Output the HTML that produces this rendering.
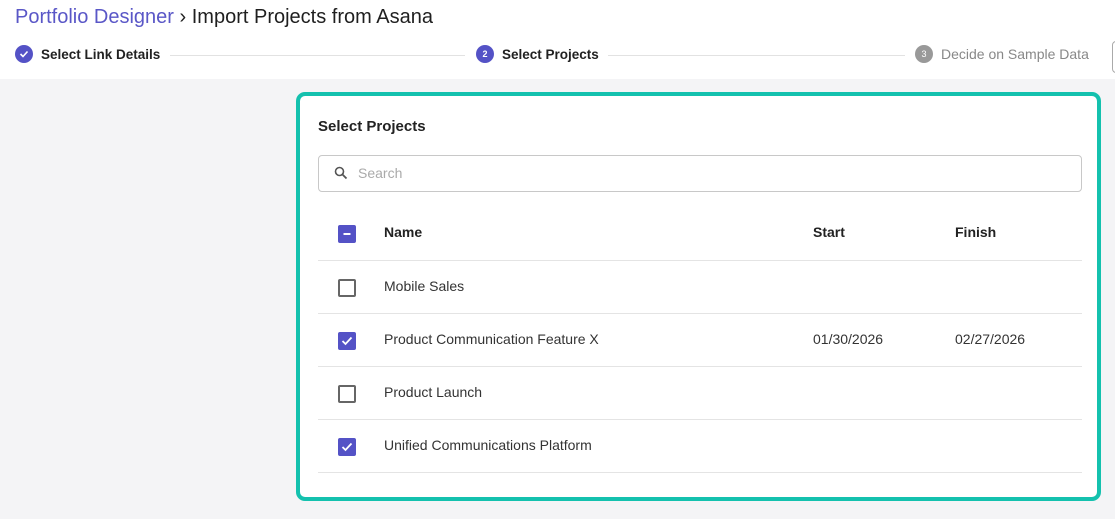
<!DOCTYPE html>
<html><head><style>
body{margin:0;width:1115px;height:519px;overflow:hidden;background:#f4f4f6;font-family:"Liberation Sans",Arial,sans-serif;position:relative}
.hdr{position:absolute;left:0;top:0;width:1115px;height:79px;background:#fff}
.title{position:absolute;left:15px;top:6px;font-size:20px;color:#1f1f1f}
.title span{color:#5a57c7}
.step{position:absolute;top:45px;font-size:13.5px;font-weight:bold;color:#222;display:flex;align-items:center}
.circ{width:18px;height:18px;border-radius:50%;background:#5452c6;color:#fff;font-size:9px;display:flex;align-items:center;justify-content:center;margin-right:8px}
.line{position:absolute;top:55px;height:1px;background:#e2e2e2}
.card{position:absolute;left:296px;top:92px;width:797px;height:401px;border:4px solid #14c1ae;border-radius:9px;background:#fff}
.h{position:absolute;left:18px;top:22px;font-size:15px;font-weight:bold;color:#222}
.search{position:absolute;left:18px;top:59px;width:762px;height:35px;border:1px solid #c8c8c8;border-radius:4px}
.search span{position:absolute;left:39px;top:9px;font-size:14px;color:#aaa}
.row{position:absolute;left:18px;width:764px;height:52px;border-bottom:1px solid #e4e4e4;font-size:14px;color:#333}
.row div{position:absolute;top:17px}
.cb{position:absolute;left:20px;top:18px;width:18px;height:18px;border:2px solid #666;border-radius:2px;box-sizing:border-box}
.cb.on{background:#5452c6;border-color:#5452c6}
</style></head><body>
<div class="hdr">
<div class="title"><span>Portfolio Designer</span> › Import Projects from Asana</div>
<div class="step" style="left:15px"><div class="circ"><svg width="10" height="10" viewBox="0 0 10 10"><path d="M1.5 5l2.5 2.5 4.5-5" stroke="#fff" stroke-width="1.6" fill="none"/></svg></div>Select Link Details</div>
<div class="line" style="left:170px;width:295px"></div>
<div class="step" style="left:476px"><div class="circ">2</div>Select Projects</div>
<div class="line" style="left:608px;width:297px"></div>
<div class="step" style="left:915px;font-weight:normal;color:#888;font-size:14px"><div class="circ" style="background:#999">3</div>Decide on Sample Data</div>
<div style="position:absolute;left:1112px;top:41px;width:6px;height:30px;border:1px solid #aaa;border-radius:4px"></div>
</div>
<div class="card">
<div class="h">Select Projects</div>
<div class="search"><svg style="position:absolute;left:15px;top:10px" width="14" height="14" viewBox="0 0 14 14"><circle cx="5.5" cy="5.5" r="4" stroke="#555" stroke-width="1.6" fill="none"/><path d="M8.5 8.5l4 4" stroke="#555" stroke-width="1.8"/></svg><span>Search</span></div>
<div class="row" style="top:113px;height:51px;font-weight:bold;color:#222"><span class="cb on" style="top:16px"><svg width="14" height="14" style="position:absolute;left:0;top:0"><path d="M3.5 7h7" stroke="#fff" stroke-width="2"/></svg></span><div style="left:66px;top:15px">Name</div><div style="left:495px;top:15px">Start</div><div style="left:637px;top:15px">Finish</div></div>
<div class="row" style="top:165px"><span class="cb"></span><div style="left:66px">Mobile Sales</div></div>
<div class="row" style="top:218px"><span class="cb on"><svg width="14" height="14" style="position:absolute;left:0;top:0"><path d="M2.5 7l3 3 6-6.5" stroke="#fff" stroke-width="1.8" fill="none"/></svg></span><div style="left:66px">Product Communication Feature X</div><div style="left:495px">01/30/2026</div><div style="left:637px">02/27/2026</div></div>
<div class="row" style="top:271px"><span class="cb"></span><div style="left:66px">Product Launch</div></div>
<div class="row" style="top:324px"><span class="cb on"><svg width="14" height="14" style="position:absolute;left:0;top:0"><path d="M2.5 7l3 3 6-6.5" stroke="#fff" stroke-width="1.8" fill="none"/></svg></span><div style="left:66px">Unified Communications Platform</div></div>
</div>
</body></html>
